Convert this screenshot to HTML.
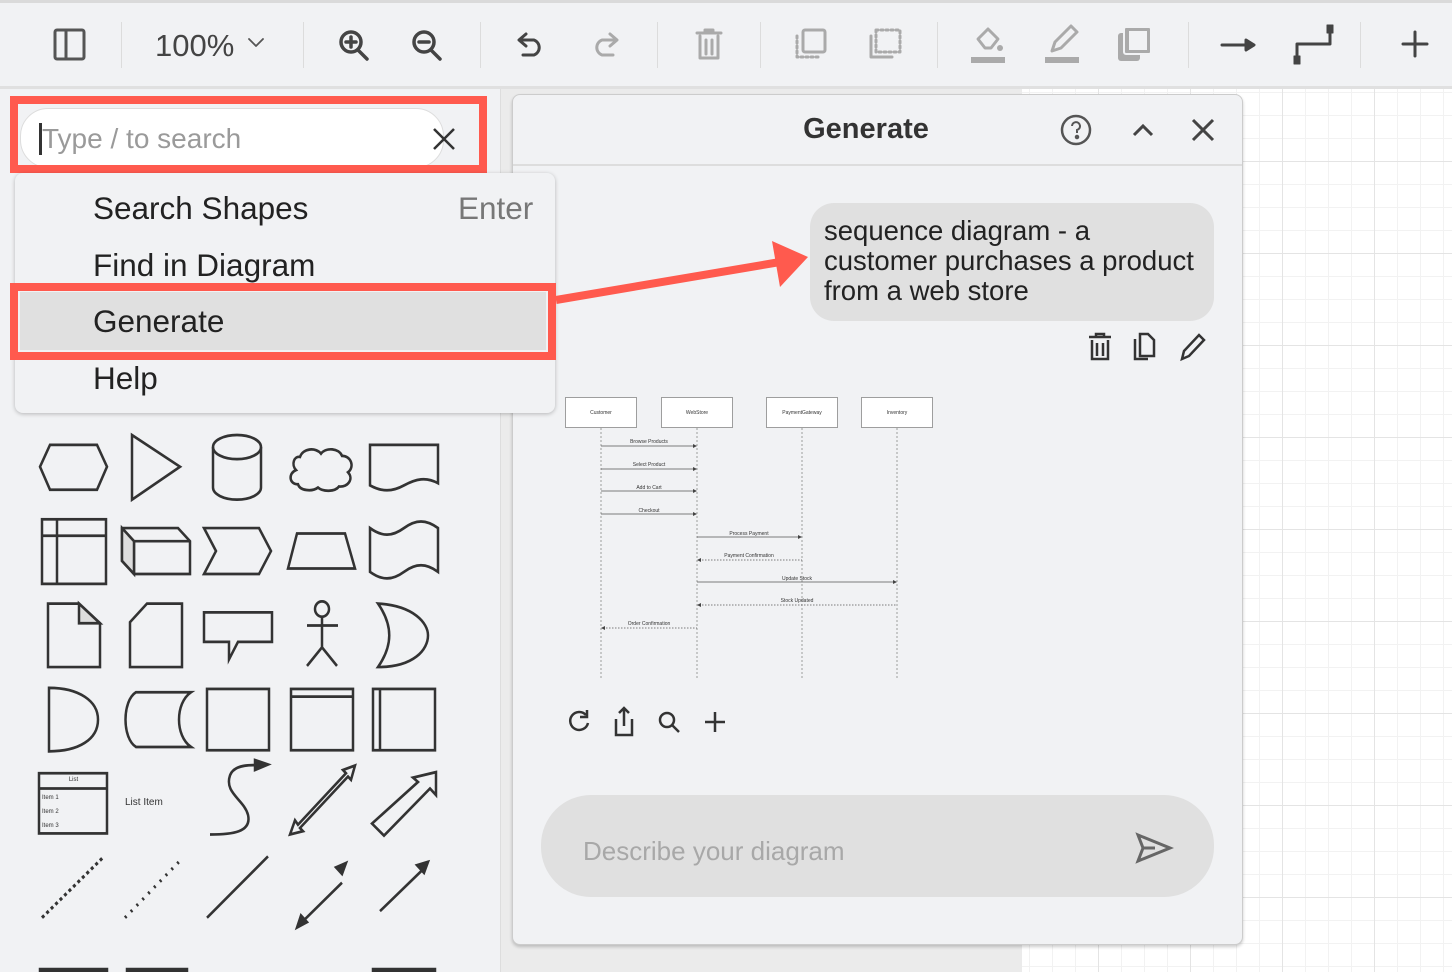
<!DOCTYPE html>
<html><head><meta charset="utf-8"><style>
*{margin:0;padding:0;box-sizing:border-box}
body{width:1452px;height:972px;overflow:hidden;background:#f1f2f4;font-family:"Liberation Sans",sans-serif;position:relative;color:#333}
.abs{position:absolute}
.sep{position:absolute;top:22px;width:1px;height:46px;background:#dcdcdc}
.mi{position:absolute;left:93px;font-size:31.5px;color:#222}
</style></head><body>
<!-- toolbar -->
<div class="abs" style="left:0;top:0;width:1452px;height:3px;background:#dadada"></div>
<div class="abs" style="left:0;top:86px;width:1452px;height:3px;background:#e0e0e0"></div>
<div class="sep" style="left:121px"></div><div class="sep" style="left:303px"></div><div class="sep" style="left:480px"></div><div class="sep" style="left:657px"></div><div class="sep" style="left:760px"></div><div class="sep" style="left:937px"></div><div class="sep" style="left:1188px"></div><div class="sep" style="left:1360px"></div>
<div class="abs" style="left:155px;top:28px;font-size:31px;color:#444">100%</div>
<svg class="abs" style="left:0;top:0" width="1452" height="88" fill="none" stroke-linecap="round" stroke-linejoin="round">
<g stroke="#555" stroke-width="3"><rect x="55" y="30" width="29" height="29" rx="2"/><line x1="66" y1="30" x2="66" y2="59"/></g>
<path d="M249 39l7 7 7-7" stroke="#555" stroke-width="1.8"/>
<g stroke="#444" stroke-width="3.5"><circle cx="351" cy="42" r="10"/><line x1="358" y1="50" x2="367" y2="59"/><line x1="346" y1="42" x2="356" y2="42"/><line x1="351" y1="37" x2="351" y2="47"/>
<circle cx="424" cy="42" r="10"/><line x1="431" y1="50" x2="440" y2="59"/><line x1="419" y1="42" x2="429" y2="42"/></g>
<g stroke-width="3"><path d="M526 34l-7 6 7 6M520 40h14a8 8 0 0 1 0 15h-11" stroke="#444"/><path d="M610 34l7 6-7 6M616 40h-14a8 8 0 0 0 0 15h11" stroke="#aaa"/></g>
<g stroke="#aaa" stroke-width="3"><path d="M697 33h24M705 33v-3h8v3M700 36v22h18v-22M706 40v14M712 40v14"/>
<rect x="803" y="30" width="22" height="22" rx="2"/><path d="M797 36v21h21" stroke-dasharray="2 3"/>
<rect x="876" y="30" width="24" height="22" stroke-dasharray="2 3"/><path d="M871 36v21h21"/></g>
<g fill="#aaa"><rect x="971" y="57" width="34" height="6"/><rect x="1045" y="57" width="34" height="6"/><path d="M978 39l10-10 10 10-7 9h-6z" fill="none" stroke="#aaa" stroke-width="3"/><circle cx="1000" cy="48" r="3"/><path d="M1052 51l3-9 16-16 6 6-16 16z" fill="none" stroke="#aaa" stroke-width="3"/><rect x="1118" y="33" width="22" height="28" rx="3"/><rect x="1124" y="27" width="27" height="27" rx="2" fill="#aaa" stroke="#f1f2f4" stroke-width="2"/><rect x="1129" y="31" width="18" height="19" fill="#f1f2f4"/></g>
<g stroke="#444" stroke-width="3"><line x1="1222" y1="45" x2="1250" y2="45"/><path d="M1246 40l8 5-8 5z" fill="#444"/><path d="M1297 60v-16h33v-16"/><rect x="1294" y="56" width="6" height="8" fill="#444" stroke-width="1"/><rect x="1327" y="25" width="6" height="8" fill="#444" stroke-width="1"/><line x1="1415" y1="32" x2="1415" y2="56"/><line x1="1403" y1="44" x2="1427" y2="44"/></g>
</svg>
<!-- canvas area -->
<div class="abs" style="left:500px;top:89px;width:522px;height:883px;background:#ebebeb;border-left:1px solid #ddd"></div>
<div class="abs" style="left:1022px;top:89px;width:430px;height:883px;background-color:#fff;background-image:linear-gradient(#e4e4e4 1px,transparent 1px),linear-gradient(90deg,#e4e4e4 1px,transparent 1px),linear-gradient(#f2f2f2 1px,transparent 1px),linear-gradient(90deg,#f2f2f2 1px,transparent 1px);background-size:92px 92px,92px 92px,23px 23px,23px 23px;background-position:0 -20px,-16px 0,0 -20px,-16px 0"></div>
<!-- shapes sidebar -->
<svg class="abs" style="left:0;top:400px" width="500" height="572" fill="none" stroke="#333" stroke-width="2.5">
<g transform="scale(1,1.0945) translate(0,-400)">
<path d="M50 441h47l10 20-10 21h-47l-10-21z"/><path d="M132 432l48 29-48 30z"/>
<ellipse cx="237" cy="443" rx="24" ry="11"/><path d="M213 443v37a24 11 0 0 0 48 0v-37"/>
<path d="M300 452c3-8 16-9 21-3 5-6 18-5 21 2 9 0 13 10 6 15 6 6 0 14-9 13-4 5-16 5-21 1-6 4-18 3-20-3-9 0-10-10-2-13-5-5-2-13 4-12z"/>
<path d="M370 441h68v35c-12-6-22-4-34 2-12 6-22 6-34 0z"/>
<rect x="42" y="509" width="64" height="59"/><line x1="42" y1="524" x2="106" y2="524"/><line x1="57" y1="509" x2="57" y2="568"/>
<path d="M122 517h56l12 12v30h-56l-12-12z"/><path d="M122 517l12 12h56M134 529v30"/><path d="M122 517l12 12v30l-12-12z" fill="#ddd"/>
<path d="M204 517h55l12 21-12 21h-55l12-21z"/><path d="M297 522h48l10 32h-67z"/>
<path d="M370 517c12 8 22 8 34 0 12-8 22-8 34 0v40c-12-8-22-8-34 0-12 8-22 8-34 0z"/>
<path d="M48 586h31l21 18v40h-52z"/><path d="M79 586v18h21z" fill="#ddd"/>
<path d="M147 586h35v58h-52v-41z"/><path d="M204 594h68v27h-34l-9 16v-16h-25z"/>
<circle cx="322" cy="591" r="7"/><path d="M322 598v28M307 606h31M307 643l15-17 15 17"/>
<path d="M378 586c36 2 50 18 50 29 0 13-14 29-50 29 15-20 15-38 0-58z"/>
<path d="M49 663c30 0 49 12 49 29 0 18-19 29-49 29z"/>
<path d="M136 667h55c-16 10-16 40 0 50h-55c-14-8-14-42 0-50z"/>
<rect x="207" y="664" width="62" height="56"/><rect x="291" y="664" width="62" height="56"/><line x1="291" y1="671" x2="353" y2="671"/>
<rect x="373" y="664" width="62" height="56"/><line x1="380" y1="664" x2="380" y2="720"/>
<rect x="39" y="741" width="68" height="55"/><line x1="39" y1="755" x2="107" y2="755"/>
<path d="M210 797c22 0 42-2 38-18-4-14-24-20-18-36 4-10 20-10 32-9" stroke-width="2.5"/><path d="M255 729l13 4-13 5z" fill="#333"/>
<path d="M290 797l5-13 3 4 48-47-3-3 12-4-4 13-3-3-48 47 3 3z"/>
<path d="M372 787l46-38-5-4 23-5v21l-6-6-46 43z"/>
<line x1="42" y1="873" x2="103" y2="818" stroke-dasharray="3 3" stroke-width="3"/>
<line x1="125" y1="873" x2="181" y2="820" stroke-dasharray="2 6" stroke-width="3"/>
<line x1="207" y1="873" x2="268" y2="817"/>
<line x1="301" y1="878" x2="342" y2="841"/><path d="M297 882l4-11 6 6zM346 823l-10 4 6 6z" fill="#333"/>
<line x1="380" y1="867" x2="424" y2="828"/><path d="M428 822l-11 3 7 7z" fill="#333"/>
</g>
<rect x="40" y="569" width="67" height="6" fill="#333"/><rect x="127" y="569" width="60" height="4" fill="#333"/><rect x="373" y="569" width="62" height="4" fill="#333"/>
</svg>
<div class="abs" style="left:40px;top:777px;font-size:6px;color:#333;width:67px;text-align:center">List</div>
<div class="abs" style="left:42px;top:791px;font-size:6px;line-height:14px;color:#333">Item 1<br>Item 2<br>Item 3</div>
<div class="abs" style="left:125px;top:797px;font-size:10px;color:#333">List Item</div>
<!-- panel -->
<div class="abs" style="left:512px;top:94px;width:731px;height:851px;background:#f1f2f4;border:1px solid #ccc;border-radius:8px;box-shadow:0 2px 3px rgba(0,0,0,.2)"></div>
<div class="abs" style="left:513px;top:164px;width:729px;height:2px;background:#ddd"></div>
<div class="abs" style="left:766px;top:113px;width:200px;text-align:center;font-size:29px;font-weight:bold;color:#333">Generate</div>
<svg class="abs" style="left:1055px;top:110px" width="170" height="40" fill="none" stroke="#555" stroke-width="2.5">
<circle cx="21" cy="20" r="14"/><path d="M17 16a4 4 0 1 1 5 4v3" stroke-width="2"/><circle cx="22" cy="27" r="1" fill="#555"/>
<path d="M79 25l9-9 9 9" stroke="#444" stroke-width="3"/><path d="M138 10l20 20M158 10l-20 20" stroke="#444" stroke-width="3"/></svg>
<div class="abs" style="left:810px;top:203px;width:404px;height:118px;background:#e0e0e0;border-radius:24px"></div>
<div class="abs" style="left:824px;top:216px;font-size:27.5px;line-height:30px;color:#222;white-space:nowrap">sequence diagram - a<br>customer purchases a product<br>from a web store</div>
<svg class="abs" style="left:1085px;top:330px" width="125" height="32" fill="none" stroke="#333" stroke-width="2.5">
<path d="M4 7h22M11 7V4h8v3M7 10v19h16V10M12 13v13M18 13v13"/>
<path d="M55 4h8l6 6v16H55z"/><path d="M50 9v20h13"/><path d="M97 29l2-8 15-16 5 5-15 16z"/></svg>
<!-- sequence diagram -->
<svg class="abs" style="left:550px;top:390px" width="400" height="300" font-family="Liberation Sans" font-size="5" fill="#333">
<g fill="#fff" stroke="#888" stroke-width=".8"><rect x="15.5" y="7.5" width="71" height="30"/><rect x="111.5" y="7.5" width="71" height="30"/><rect x="216.5" y="7.5" width="71" height="30"/><rect x="311.5" y="7.5" width="71" height="30"/></g>
<g text-anchor="middle"><text x="51" y="24">Customer</text><text x="147" y="24">WebStore</text><text x="252" y="24">PaymentGateway</text><text x="347" y="24">Inventory</text>
<text x="99" y="53">Browse Products</text><text x="99" y="76">Select Product</text><text x="99" y="99">Add to Cart</text><text x="99" y="122">Checkout</text><text x="199" y="145">Process Payment</text><text x="199" y="167">Payment Confirmation</text><text x="247" y="190">Update Stock</text><text x="247" y="212">Stock Updated</text><text x="99" y="235">Order Confirmation</text></g>
<g stroke="#888" stroke-width=".8" stroke-dasharray="2 2"><line x1="51" y1="38" x2="51" y2="288"/><line x1="147" y1="38" x2="147" y2="288"/><line x1="252" y1="38" x2="252" y2="288"/><line x1="347" y1="38" x2="347" y2="288"/></g>
<g stroke="#555" stroke-width=".8"><line x1="51" y1="56" x2="145" y2="56"/><line x1="51" y1="79" x2="145" y2="79"/><line x1="51" y1="101" x2="145" y2="101"/><line x1="51" y1="124" x2="145" y2="124"/><line x1="147" y1="147" x2="250" y2="147"/><line x1="147" y1="192" x2="345" y2="192"/>
<g stroke-dasharray="1.5 1.5"><line x1="149" y1="170" x2="252" y2="170"/><line x1="149" y1="215" x2="347" y2="215"/><line x1="53" y1="238" x2="147" y2="238"/></g></g>
<g fill="#444"><path d="M147 56l-4-2v4zM147 79l-4-2v4zM147 101l-4-2v4zM147 124l-4-2v4zM252 147l-4-2v4zM347 192l-4-2v4zM147 170l4-2v4zM147 215l4-2v4zM51 238l4-2v4z"/></g>
</svg>
<svg class="abs" style="left:560px;top:705px" width="170" height="36" fill="none" stroke="#333" stroke-width="2.5">
<path d="M26 10a9 9 0 1 0 2 8"/><path d="M27 5v7h-7" stroke-width="2.5"/>
<path d="M56 14v16h16V14M64 3v18M59 8l5-5 5 5"/>
<circle cx="107" cy="15" r="7"/><path d="M112 20l7 7"/><path d="M155 7v20M145 17h20"/></svg>
<!-- input -->
<div class="abs" style="left:541px;top:795px;width:673px;height:102px;background:#e0e0e0;border-radius:50px"></div>
<div class="abs" style="left:583px;top:836px;font-size:26px;color:#a8a8a8">Describe your diagram</div>
<svg class="abs" style="left:1135px;top:832px" width="40" height="32" fill="none" stroke="#666" stroke-width="3"><path d="M3 3l32 13-32 13 5-13z"/><line x1="8" y1="16" x2="20" y2="16"/></svg>
<!-- search -->
<div class="abs" style="left:20px;top:108px;width:424px;height:60px;background:#fff;border-radius:28px;border:1px solid #ddd"></div>
<div class="abs" style="left:39px;top:123px;width:3px;height:32px;background:#333"></div>
<div class="abs" style="left:42px;top:123px;font-size:28px;color:#9a9a9a">Type / to search</div>
<svg class="abs" style="left:432px;top:127px" width="24" height="24" stroke="#333" stroke-width="2.5"><path d="M2 2l20 20M22 2l-20 20"/></svg>
<div class="abs" style="left:10px;top:96px;width:477px;height:77px;border:8px solid #ff5a4e"></div>
<!-- menu -->
<div class="abs" style="left:15px;top:173px;width:540px;height:240px;background:#f1f2f4;border-radius:8px;box-shadow:0 1px 4px rgba(0,0,0,.25)"></div>
<div class="abs" style="left:20px;top:292px;width:526px;height:58px;background:#e0e0e0"></div>
<div class="mi" style="top:190px">Search Shapes</div>
<div class="abs" style="left:458px;top:190px;font-size:31.5px;color:#777">Enter</div>
<div class="mi" style="top:247px">Find in Diagram</div>
<div class="mi" style="top:303px">Generate</div>
<div class="mi" style="top:360px">Help</div>
<div class="abs" style="left:10px;top:283px;width:546px;height:77px;border:8px solid #ff5a4e"></div>
<!-- red arrow -->
<svg class="abs" style="left:540px;top:230px" width="280" height="90"><line x1="16" y1="70" x2="240" y2="32" stroke="#ff5a4e" stroke-width="8"/><path d="M268 27l-36-16 8 46z" fill="#ff5a4e"/></svg>
</body></html>
